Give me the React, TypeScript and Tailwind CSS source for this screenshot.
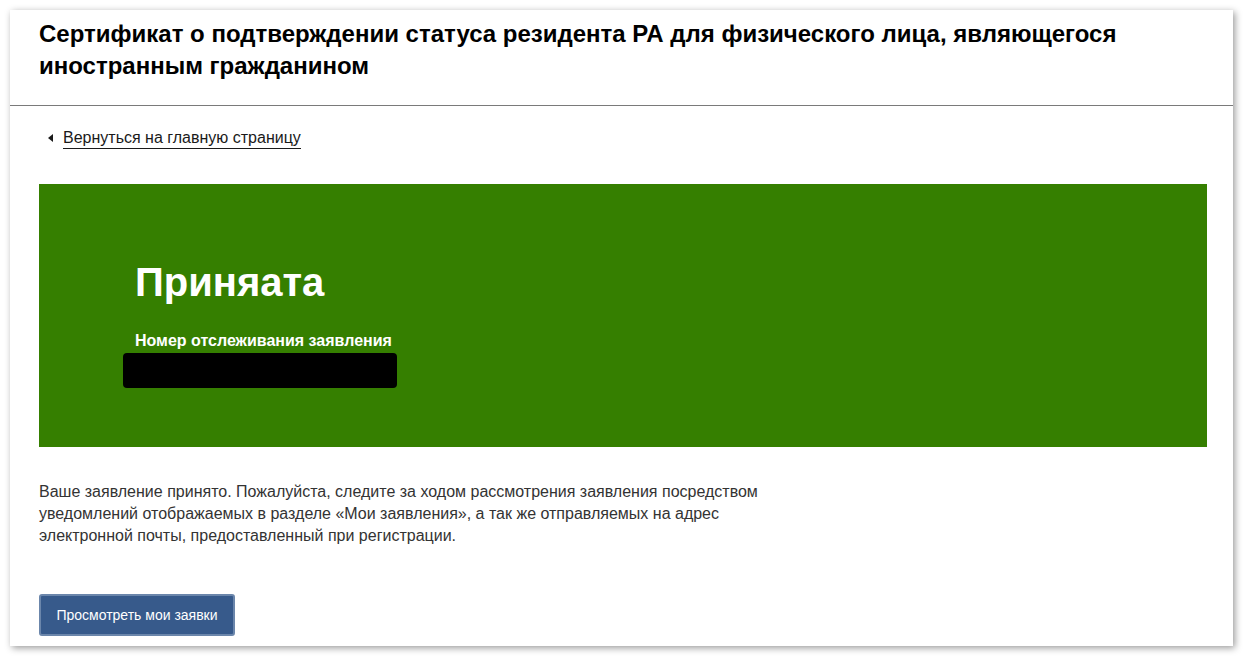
export default function App() {
  return (
    <div className="min-h-screen bg-white p-[10px] font-['Liberation_Sans',Arial,sans-serif]">
      <div className="bg-white shadow-[2px_2px_7px_rgba(0,0,0,0.4)] h-[636px] flex flex-col">
        <header className="border-b border-[#7a7a7a] px-[29px] pt-[8px] h-[96px]">
          <h1 className="text-[24px] leading-[32px] font-bold text-black">
            Сертификат о подтверждении статуса резидента РА для физического лица, являющегося иностранным гражданином
          </h1>
        </header>

        <div className="pl-[29px] pr-[26px] pt-[19px]">
          <a href="#" className="inline-flex items-center gap-[10px] text-[16px] text-[#1a1a1a]">
            <span className="w-0 h-0 border-y-[4px] border-y-transparent border-r-[5px] border-r-[#1a1a1a] ml-[9px]" />
            <span className="border-b border-[#1a1a1a] leading-[20px]">Вернуться на главную страницу</span>
          </a>

          <section className="mt-[35px] bg-[#357f00] h-[263px] pl-[96px] pt-[74px]">
            <h2 className="text-[40px] leading-[48px] font-bold text-white">Приняата</h2>
            <div className="mt-[26px] text-[16px] leading-[18px] font-bold text-white">Номер отслеживания заявления</div>
            <div className="-ml-[12px] mt-[3px] w-[274px] h-[35px] bg-black rounded-[4px]" />
          </section>

          <p className="mt-[34px] max-w-[760px] text-[16px] leading-[22px] text-[#333333]">
            Ваше заявление принято. Пожалуйста, следите за ходом рассмотрения заявления посредством уведомлений отображаемых в разделе «Мои заявления», а так же отправляемых на адрес электронной почты, предоставленный при регистрации.
          </p>

          <button className="mt-[47px] w-[196px] h-[42px] rounded-[3px] bg-[#375a8b] border-2 border-[#6b86ab] text-white text-[14px]">
            Просмотреть мои заявки
          </button>
        </div>
      </div>
    </div>
  );
}
